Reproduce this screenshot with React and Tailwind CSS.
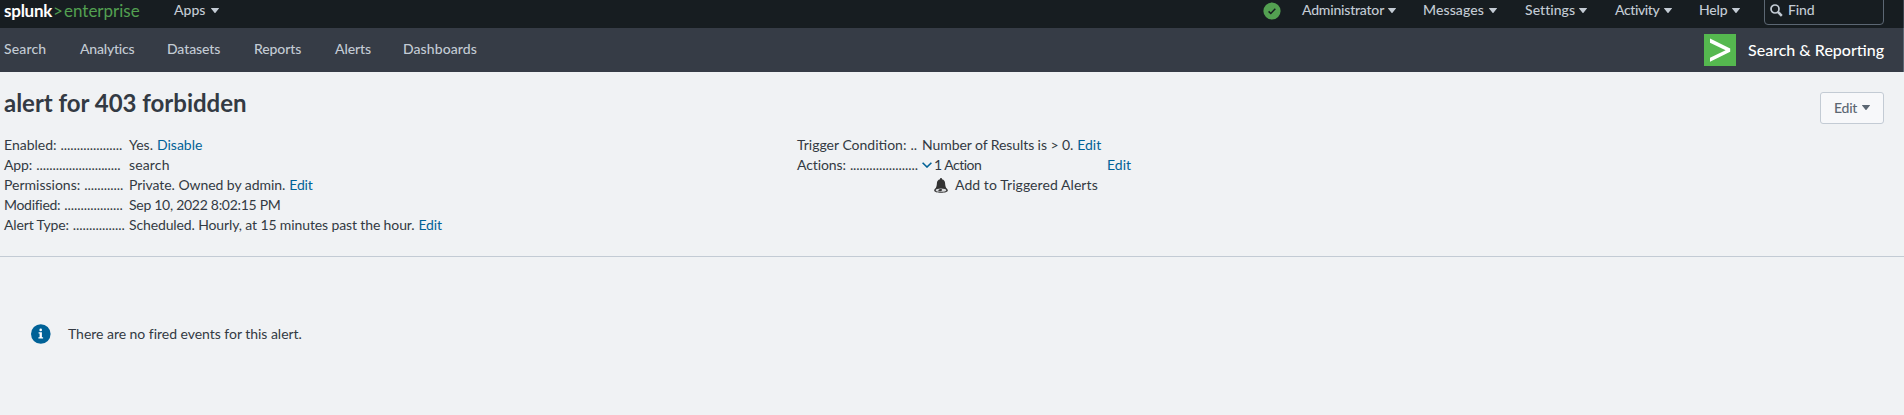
function Caret({ className = '' }) {
  return (
    <svg viewBox="0 0 8 5" className={`h-[5px] w-2 shrink-0 ${className}`} fill="currentColor">
      <path d="M0.4 0h7.2c.4 0 .5.4.3.6L4.5 4.7a.6.6 0 0 1-1 0L.1.6C-.1.4 0 0 .4 0z" />
    </svg>
  );
}

const menus = [
  { label: 'Administrator', item: 'w-[121px]', text: 'w-[86px] tracking-[-0.2px]' },
  { label: 'Messages', item: 'w-[102px]', text: 'w-[66px] tracking-[0.1px]' },
  { label: 'Settings', item: 'w-[90px]', text: 'w-[54px] tracking-[0.05px]' },
  { label: 'Activity', item: 'w-[84px]', text: 'w-[49px] tracking-[-0.4px]' },
  { label: 'Help', item: 'w-[65px]', text: 'w-[33px] tracking-[-0.15px]' },
];

const tabs = [
  { label: 'Search', cls: 'w-[76px] tracking-[0.15px]' },
  { label: 'Analytics', cls: 'w-[87px] tracking-[-0.2px]' },
  { label: 'Datasets', cls: 'w-[87px] tracking-[-0.1px]' },
  { label: 'Reports', cls: 'w-[81px] tracking-[-0.1px]' },
  { label: 'Alerts', cls: 'w-[68px] tracking-[-0.1px]' },
  { label: 'Dashboards', cls: 'tracking-[0.08px]' },
];

function Link({ children, className = '' }) {
  return <a className={`text-[#006297] ${className}`}>{children}</a>;
}

function Row({ label, dots, labelClass = '', children }) {
  return (
    <div className="flex h-5">
      <dt className="flex w-[125px] shrink-0 gap-1">
        <span className={labelClass}>{label}</span>
        <span className="tracking-[-0.06px]">{dots}</span>
      </dt>
      <dd className="flex gap-1">{children}</dd>
    </div>
  );
}

export default function App() {
  return (
    <div className="h-[415px] w-full overflow-hidden whitespace-nowrap bg-[#f0f2f4] font-['Lato','Liberation_Sans',sans-serif] text-sm leading-5 text-[#333a43]">
      <header className="flex h-7 items-start border-r border-[#3c444d] bg-[#171d21] font-medium text-[#c3cbd4]">
        <div className="flex h-[21px] w-[170px] items-center pl-1 text-[17px]">
          <span className="w-[49px] font-bold tracking-[-0.25px] text-white">splunk</span>
          <span className="w-[11px] font-normal text-[#53a051]">&gt;</span>
          <span className="font-normal text-[#53a051]">enterprise</span>
        </div>
        <div className="ml-1 flex h-5 items-center">
          <span className="w-[37px]">Apps</span>
          <Caret />
        </div>
        <div className="ml-auto flex h-5 items-center pr-[19px]">
          <svg viewBox="0 0 18 18" className="mr-[21px] mt-[2px] h-[18px] w-[18px]">
            <circle cx="9" cy="9" r="8.6" fill="#53a051" />
            <path d="M5.6 9.4l2.2 2.1 4.5-4.7" fill="none" stroke="#171d21" strokeWidth="1.5" />
          </svg>
          {menus.map((m) => (
            <div key={m.label} className={`flex items-center ${m.item}`}>
              <span className={m.text}>{m.label}</span>
              <Caret />
            </div>
          ))}
          <div className="flex h-[30px] w-[120px] items-center rounded border border-[#5c6773] pl-[5px]">
            <svg viewBox="0 0 13 13" className="h-[13px] w-[13px]" fill="none" stroke="currentColor">
              <circle cx="5" cy="5" r="4" strokeWidth="1.7" />
              <path d="M8 8l3.8 3.8" strokeWidth="2.5" />
            </svg>
            <span className="ml-[5px] tracking-[-0.1px]">Find</span>
          </div>
        </div>
      </header>
      <nav className="flex h-11 items-center border-r border-[#5c6773] bg-[#363c46] pl-1 pr-[19px] font-medium text-[#c3cbd4]">
        <div className="flex pb-[2px]">
          {tabs.map((t) => (
            <a key={t.label} className={t.cls}>{t.label}</a>
          ))}
        </div>
        <div className="ml-auto flex items-center">
          <svg viewBox="0 0 32 32" className="h-8 w-8">
            <rect width="32" height="32" fill="#55b84f" />
            <path d="M6 4.6l20.2 10v3.2L6 27.8v-4.1l15.600-7.500L6 8.700z" fill="#fff" />
          </svg>
          <span className="ml-3 w-[136px] pb-px text-base leading-5 text-white">Search &amp; Reporting</span>
        </div>
      </nav>
      <main>
        <div className="flex h-[63px] items-start justify-between pl-1 pr-5 pt-5">
          <h1 className="-mt-[3px] text-2xl font-bold leading-7 tracking-[-0.02px]">alert for 403 forbidden</h1>
          <button className="flex h-8 w-16 items-center rounded-[3px] border border-[#c3cbd4] bg-[#f7f8fa] pb-px pl-[13px] text-left font-medium text-[#5c6773]">
            <span className="w-[28px] tracking-[-0.25px]">Edit</span>
            <Caret />
          </button>
        </div>
        <section className="grid h-[122px] grid-cols-[793px_1fr] border-b border-[#c3cbd4] pl-1">
          <dl>
            <Row label="Enabled:" dots="...................">
              <span>Yes.</span>
              <Link>Disable</Link>
            </Row>
            <Row label="App:" dots=".........................." labelClass="tracking-[-0.1px]">
              <span className="tracking-[0.15px]">search</span>
            </Row>
            <Row label="Permissions:" dots="............">
              <span className="tracking-[-0.06px]">Private. Owned by admin.</span>
              <Link className="tracking-[-0.15px]">Edit</Link>
            </Row>
            <Row label="Modified:" dots=".................." labelClass="tracking-[-0.3px]">
              <span className="tracking-[-0.28px]">Sep 10, 2022 8:02:15 PM</span>
            </Row>
            <Row label="Alert Type:" dots="................" labelClass="tracking-[-0.15px]">
              <span className="tracking-[-0.12px]">Scheduled. Hourly, at 15 minutes past the hour.</span>
              <Link className="tracking-[-0.15px]">Edit</Link>
            </Row>
          </dl>
          <dl>
            <Row label="Trigger Condition:" dots="..">
              <span className="tracking-[-0.08px]">Number of Results is &gt; 0.</span>
              <Link>Edit</Link>
            </Row>
            <Row label="Actions:" dots="....................." labelClass="tracking-[-0.1px]">
              <div className="w-[184px]">
                <div className="flex h-5 items-center">
                  <svg viewBox="0 0 10 6" className="mr-[2px] h-[6px] w-[10px]" fill="none" stroke="#006297" strokeWidth="1.6">
                    <path d="M.6.7L5 5l4.4-4.3" />
                  </svg>
                  <span className="tracking-[-0.5px]">1 Action</span>
                </div>
                <div className="flex h-5 items-center pl-3">
                  <svg viewBox="0 0 14 15" className="mr-[7px] h-[15px] w-[14px]">
                    <path d="M6 1.200C6 .4 6.400 0 7 0s1 .4 1 1.200c2 .5 3 2 3.100 4 .1 2.700.7 4.200 1.600 5.300.8.9 1.100 1.400 1.100 2 0 1.300-3 2.300-6.800 2.300S.2 13.800.2 12.500c0-.6.3-1.100 1.100-2C2.200 9.400 2.800 7.900 2.900 5.200 3 3.200 4 1.700 6 1.200z" fill="#333" />
                    <ellipse cx="7" cy="12.2" rx="5.3" ry="1.6" fill="#d7d9db" />
                    <path d="M4.2 13.200c.2-1.400 1.200-2.200 2.500-2.200.8 0 1.300.4 1.300 1 0 .9-1.500 1.600-3.800 1.200z" fill="#333" />
                  </svg>
                  <span className="tracking-[0.07px]">Add to Triggered Alerts</span>
                </div>
              </div>
              <Link className="-ml-[3px]">Edit</Link>
            </Row>
          </dl>
        </section>
        <section className="flex items-center pl-[31px] pt-[67px]">
          <svg viewBox="0 0 20 20" className="h-5 w-5">
            <circle cx="9.8" cy="10" r="9.8" fill="#006297" />
            <circle cx="9.7" cy="5.9" r="1.3" fill="#fff" />
            <path d="M7.6 8.300h3.300v5h1.200v1.300H7.400v-1.300h1.200V9.600h-1z" fill="#fff" />
          </svg>
          <span className="ml-[17px] tracking-[-0.03px]">There are no fired events for this alert.</span>
        </section>
      </main>
    </div>
  );
}
